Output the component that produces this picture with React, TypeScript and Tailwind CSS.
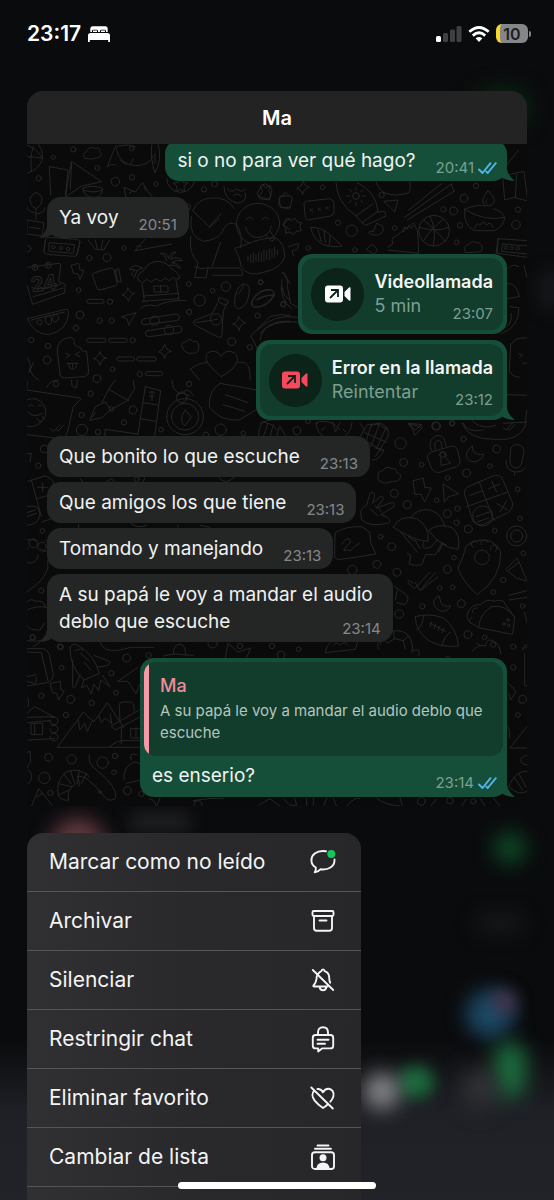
import type { ReactNode } from "react";

type IconProps = { className?: string };

/* =================== Fondo de garabatos =================== */

type Tile = { x: number; y: number; paths: string[]; dots: number[][] };

// Cada bloque se dibuja a 3x y se reduce al colocarlo
const TILES: Tile[] = [
  {
    x: 20,
    y: 140,
    paths: [
      // pelota, nube, ballena
      "M20 15q30 10 48 40q-10 35-48 45M20 50q25 0 48 5M40 20q-12 35-5 75M55 12q15 20 13 43",
      "M195 55q-12-12 4-20q8-18 24-10q18-4 16 10q12 10-4 18q-20 8-40 2Z",
      "M262 80q16-42 24-60q40-10 60 0M262 80q15-12 26-4M288 25q10 50 60 52q40 0 52-30M395 15q-4 44 10 84q22-40 10-84M405 40v30M300 60l20 15M330 76l10-20",
      // barco y taza
      "M88 80l4 84M88 80l56 10-8 80M155 65l90 60-62 14-46 32ZM155 65l-4 82M188 145q30-12 60 0q0 26-24 28q-32 0-36-28ZM190 150q30 12 56 0M180 172h70",
      // gato
      "M318 172l-6-30 34 14 22-28 16 26 14 18M328 160l8-6M372 140l6 12",
      // estrella en circulo
      "M440 115a42 42 0 0 0 84 0a42 42 0 0 0-8-24M482 112l6 15 16 2-12 10 2 16-13-8-14 8 4-16-11-10 15-2Z",
      // planta
      "M30 175q18-34 36-2q0 24-16 32q-20-2-20-30ZM48 205v34M48 220q-30-6-28-22M50 222q26-4 24-18M22 240l50 8-6 40-44-6ZM30 262l30 4",
      // boton con puntos
      "M76 300q0-8 8-8l88 6q8 2 8 10l-8 36q-4 6-12 5l-80-6q-8-2-8-8ZM88 308l76 6-4 26-72-6ZM76 300l-4 34M180 304l-10 40",
      // comida
      "M205 300l20 28 26 2 18-30M226 300l6 26M248 300l-4 28M345 332l30-34M345 332l110-20M350 318l14 2",
      // calendario
      "M22 382l95-12q6 0 5 7l-6 48 20 8-2 26-96 34-18-60M44 372v14M84 366v16M34 440q14 14 30 2q16 10 32-6q14 6 26-4M40 470l90-26",
      // rayo y camara
      "M154 376l22-6 4 20 12 2-12 26-6-16-12-2ZM218 408q-2-8 6-10l46-14q10 0 12 8l10 36q0 8-8 10l-44 12q-8 0-10-8ZM284 396l12-10 8 40-14-4M286 388l6 36",
      // cabana
      "M352 412q4-12 22-24q12-24 42-24q28 4 38 22q20 10 26 28l-12 4-8-6-12 10-12-8-14 10-14-8-14 10-14-8-12 10-12-8ZM366 432l6 36M468 420l8 48M372 468l104-8M366 484l112-8M402 438h42v18h-40ZM422 436v22M372 468v18M476 460v18M362 506q10-16 48-8q40-20 88-16",
      "M440 362q-2-18-20-22q22-4 26 16q4-20 22-20q-12 6-16 22q20-12 36 4q-18-4-34 6q22 2 26 18q-16-14-34-10M352 392q-14-4-24-4q12-20 40-4q-20 4-24 28q-16-12-2-20",
      // sandia
      "M22 536l114-28q10-2 10 8q-2 56-60 68q-44 0-64-48ZM34 540l100-24M50 546q4-10 12-6q8 8 2 14q-12 2-14-8ZM76 536q6-16 14-8q10 18 0 26q-16-2-14-18ZM100 526q14-8 16 8q-2 10-12 12q-10-6-4-20",
      "M206 478h40q6 0 6 6t-6 6h-40q-6 0-6-6t6-6ZM206 595h46q6 0 6 6t-6 6h-46q-6 0-6-6t6-6ZM272 595h44q6 0 6 6t-6 6h-44q-6 0-6-6t6-6ZM296 651h42q6 0 6 6t-6 6h-42q-6 0-6-6t6-6ZM356 651h46q6 0 6 6t-6 6h-46q-6 0-6-6t6-6ZM382 695h40q6 0 6 6t-6 6h-40q-6 0-6-6t6-6Z",
      "M306 530l42-12-22 38-4-18ZM324 444q4 16 20 16q-16 6-18 24q-4-16-20-20q16-4 18-20ZM240 636q4 16 20 18q-18 4-20 22q-4-18-20-20q16-4 20-20ZM434 614q4 16 20 20q-18 4-20 22q-4-18-18-20q14-6 18-22ZM656 530q4 14 22 18q-18 4-20 24q-4-18-20-20q16-6 18-22Z",
      "M374 536l96-14q10 2 8 12q-2 8-8 8l-98 12q-8-2-8-8t10-10ZM382 572l96-14q10 2 8 12q-2 8-8 8l-90 12q-10 0-12-8t6-10Z",
      // paleta
      "M120 704l-8-70q-2-34 36-42q18 2 14 14q2 14 18 16q4 14 20 12l6 60q0 14-12 16l-62 4q-10 0-12-10ZM136 640l14 6-12 8M178 636l-12 8 14 6M140 670h34M146 672q2 16 12 16q12-2 12-18M158 672v12M20 650q14 20 10 40q10 24 26 30M40 668l-14 30",
      // persona sentada
      "M518 212q20-40 60-38q40-4 64 30M518 212l50 48 36-40M514 230q-10 60 36 74q50-4 64-42q14-20 36-8q20 30 12 70M512 290q-6 50 22 78l-10 44 34 2 6-30h94q12 8 10 22h-90M576 380l26-74M568 262l30-26M524 380q20 10 40 4",
      "M612 140q0 40 40 50q30-4 24-30M622 146q14 16 26 0q16 14 28 2M640 166q14-10 24 4",
      // cara
      "M649 252a65 62 0 0 1 130 0a65 62 0 0 1-26 44M649 252a65 62 0 0 0 40 58M678 240q10-18 22 0M726 240q10-16 20-2M676 262q10 34 44 30q30-6 34-34M736 284l18 18q10 2 10-8l-14-20",
      // nota de voz
      "M648 324l24-8q60-26 96-22q26 16 26 56q-8 34-60 46q-50 18-70-16q-4-30-20-56ZM684 348v14M692 344v24M700 338v30M708 344v20M716 336v28M724 340v24M732 330v34M740 334v24M748 326v34M756 328v26M764 322v30M772 330v14",
      // botella, sandalias
      "M598 472l28 12-8 12-22-10ZM592 490l-14 30-56 22q-4 10 4 14l70 36q10 2 10-6l4-74 12-24M528 548l64-10M644 486q0-40 24-54q22-2 20 24q-6 46-32 50q-14-2-12-20ZM652 462q16-12 20-30M694 492q8-36 46-44q26 0 22 16q-20 34-54 38q-14 0-14-10ZM712 480q20-14 50-16",
      "M736 132l14 8-4 12 8 14-8 12-30-8 12-16-6-14ZM792 168q-14 0-14 12l4 22h28M810 236q-14 4-20 20l20 12M784 400q8-10 12 10l14 20M786 440q4 30 24 40M690 590l60-60q30-10 60-4M694 590l20 40 96-30M720 600q10-60 90-56",
      // globo con corazon
      "M604 710q-40-34-46-52q-2-24 22-24q16 0 24 16q10-18 28-16q24 6 20 30q-8 24-48 46ZM512 688q20-20 50-20M512 688l26 32M654 668q40-10 36 52M486 620q-6-14 12-14q10-14 20-2q20-2 18 16q2 20-18 20q-24 4-32-20Z",
    ],
    dots: [
      [100, 52, 6], [160, 28, 8], [335, 26, 7], [232, 84, 7], [56, 115, 8], [286, 125, 13], [336, 112, 8], [408, 132, 7],
      [552, 148, 8], [504, 200, 8], [24, 326, 9], [312, 324, 7], [208, 354, 8], [261, 353, 12], [176, 450, 7],
      [270, 485, 8], [539, 481, 17], [506, 432, 7], [578, 452, 7], [618, 440, 14], [722, 427, 7], [790, 494, 7],
      [180, 525, 12], [239, 542, 8], [275, 542, 8], [168, 564, 8], [34, 600, 8], [84, 618, 8], [81, 660, 12],
      [338, 601, 8], [278, 688, 7], [359, 702, 8], [231, 716, 12], [635, 605, 12], [690, 622, 8], [507, 516, 8],
      [588, 538, 17], [713, 527, 8], [404, 542, 14], [447, 570, 14], [100, 322, 5], [122, 324, 5], [144, 327, 5],
      [45, 382, 9], [85, 376, 9], [584, 132, 9],
    ],
  },
  {
    x: 250,
    y: 140,
    paths: [
      "M22 160l16-28 8 12 14-8 6 14-8 30-28-4ZM160 124q4 16 18 18q-18 4-20 22q-4-16-18-18q16-6 20-22ZM92 168h28q8 2 6 10l-6 24q-4 6-10 4l-20-6q-6-4-4-10ZM98 168q4-20 18-2",
      "M168 184l70-8q12 2 14 12v28q0 10-10 12l-66 12q-8 0-10-8l-4-40ZM180 206l8 8m0-8l-8 8M204 204l8 8m0-8l-8 8M228 200l8 8m0-8l-8 8",
      // cohete
      "M258 128q2 60 60 100l18 20 48-34q-6-60-62-86M318 228l50-36M336 248l12 8 60-28-4-14-22 2M318 150v-10M318 186v10M300 168h-10M336 168h10M304 154l-6-6M332 154l8-6M304 180l-6 8M332 180l6 8",
      "M378 124q10 30 30 36q30 10 60 0q16 4 12-36M402 184l42-4-10 36-16-16ZM464 232l140-100M472 240l140-86M476 210l100-80M604 132l8 22",
      // baloncesto
      "M506 272a46 46 0 1 0 92 0a46 46 0 1 0-92 0M508 262q50 16 88 0M540 228q20 40 10 90M522 240q44 40 64 64M580 238q-40 30-60 66",
      // lampara
      "M644 208q-4 50 30 64h60q28-14 30-40q-60 14-120-24ZM644 208q40-18 60-10M730 206q28 8 34 26M714 152q-28 34-8 44q24 6 28-14q-4-18-20-30ZM712 178q-10 8 0 14M674 266q6-22 16-10q10-20 20 0q10-16 20 6",
      "M758 108l64-14 10 80M758 108l6 72 36-10M800 104l-4 70 34 8M760 90q20-30 46-60M738 342l6-46 88 6M744 296l-2 44 90 12M758 312l74 6M758 312l-4 22 78 8M806 380q-20-10-30 4M822 376l10 40",
      "M104 244l8-10 12 8 10-8 8 12 12 2-4 14 4 10-16 2-8 10-12-8-12 4 2-14-8-10ZM182 262q36 0 60 24l34 32q-20 6-56-4q-32-16-38-52ZM204 270l10 34M222 272l4 34M240 286l-2 28M370 274l10-24 18 8 2 16q-14 18-40 8q-12-8 10-8Z",
      "M412 322l16-10-2-16 56-40 8-8 12 24q4 30 4 70M414 330l90 10M460 276l4-16 8 8 4-12 8 10 6-10M644 326q0-12 12-12q8-14 22-6q14-2 18 12q4 18-14 16l-34 2Z",
      "M350 328l12-14q14 0 20 18l-10 10ZM116 320l30-10-4 18-16 4 4 14M100 400q14 6 12 40l10 50 28 16M96 420q-10 60 30 86M6 484q20-36 56-34q16 4 10 18q-18 32-52 34q-16-2-14-18ZM20 478q30-16 50-10M22 570q50-50 120-38M30 580q30-40 110-34M780 500q30 4 26 2q4 60-54 80M784 520q4 40-30 48M772 430q30 0 36 40l-36 6M786 610q10-20 46-16M782 610l-4 80q4 20 30 22M806 640l12 6-10 8M818 670h14M770 764l62 2M30 850q10-10 20 0q18 0 30 20M200 852q6-10 20-8q30 0 50 26M330 850l14 20M360 862q20-20 40 0q20 2 10 8M476 850l40 4-20 16ZM640 850q10 30 60 20M760 850l70-4",
    ],
    dots: [
      [218, 142, 7], [395, 165, 8], [264, 248, 8], [305, 272, 17], [175, 324, 7], [434, 264, 7], [315, 330, 7], [318, 168, 10],
      [580, 208, 8], [611, 213, 12], [642, 175, 12], [678, 138, 8], [630, 256, 8], [620, 307, 7], [804, 209, 8], [798, 254, 13],
      [768, 323, 5], [785, 324, 5], [803, 325, 5], [32, 426, 7], [100, 492, 8], [560, 858, 12], [606, 850, 8],
    ],
  },
  {
    x: 20,
    y: 380,
    paths: [
      // globo con cara
      "M20 30l160 24q6 4-2 8l-18 18-16 70q-4 20-20 26l-104-12M20 60q30-14 52 16q16 30-12 54q-20 14-40 8M26 80q8-12 16 0M54 78q6-8 12 0M24 96q16 20 44 4M50 114l10 12q14-4 8-16M90 146l10 8 20-20M108 148l6 6 18-20",
      // pincel y cinta
      "M210 120l16-40 30-14 16 24-26 22ZM246 68l20-40 20-28M272 90l50-28 22-36-4-26M266 28l60 34M226 98l-8 14M376 20l46 12-18 136M376 20l-22 142M370 68l46 8M362 116l46 8M388 38q10-8 16 0M396 34v28M388 48h14M256 148l96 14M256 148l-2 22M20 34l2-30M80 22q10-22 34-22M154 0l2 16q4 10 14 6l2-22",
      // brujula
      "M440 110a55 54 0 1 0 110 0a55 54 0 1 0-110 0M454 110a41 40 0 1 0 82 0a41 40 0 1 0-82 0M496 90l18 22-20 26q-20-20 2-48ZM470 48q10-12 20-8l20 8M456 0q0 30 22 40M490 36q14-16 30 10",
      "M600 10q-34 20-32 70q30 44 90 40l50-30M616 44l68 24M610 74l64 20M600 10l110 20M716 170q0-30 10-40q20-14 50-10M730 170l14-40M750 170l10-36M770 170l8-30",
      // calculadora y fruta
      "M24 304l50-16q20 4 26 20l20 84q0 14-14 20l-40 14M34 300l30 110M50 356l64-18M68 308v28M54 322h28M20 380q40-10 40 24q-4 30-40 32M20 398l26-8M20 410l30-10M20 222l14-2-4 26M180 296l8 10M258 306l16-10 10 10M374 294l-4 12M596 290q16 30 50 0",
      "M24 506a24 22 0 1 0 30 20M62 506a16 16 0 1 0 14-24M20 480q16-4 30 2M84 540q10 50-64 96M20 668q10-16 26-4q26-6 30 18M20 690q30-14 60-8M20 736q10 16 40 14l14-20M78 778q-30 10-58 4M330 428q20 20 50 8M176 434v10M474 434v8M540 436l30 6",
    ],
    dots: [
      [108, 12, 8], [212, 41, 8], [274, 87, 7], [339, 90, 12], [185, 105, 8], [312, 127, 8], [186, 150, 17], [234, 156, 8],
      [423, 149, 7], [507, 12, 8], [602, 149, 17], [670, 160, 7], [485, 52, 16], [73, 207, 12], [55, 257, 8], [67, 453, 7],
      [40, 490, 13], [66, 500, 13], [64, 632, 8], [38, 772, 8], [120, 800, 8], [558, 164, 8], [350, 298, 7],
    ],
  },
  {
    x: 280,
    y: 410,
    paths: [
      "M108 36a54 54 0 0 0 108 0M158 36l8 30 14-28M126 60l8-8M196 66l-6-8M0 50l16 26M240 80l22-36 40-4q28 10 22 40l-38 60M254 68l64 28M248 86l56 36M274 44l-16 50M298 44l-26 66M316 56l-26 60M286 114q20 2 26 6q-12 30-36 30",
      "M386 42l42 10-24 24-6-20ZM546 40q20 50 100 48q70 6 90-40l4-48M576 32q30 30 70 14M670 52l8 8 20-22M682 56l6 6 16-18",
      // candado
      "M442 142q0-12 12-16l62-18q12 0 16 10l8 34q2 12-10 18l-54 18q-14 0-20-10ZM454 122l-4-18q2-24 24-28q20 2 22 24l2 8M466 116l-2-14q4-12 14-10q6 2 6 10l2 12M482 142a10 10 0 1 1 14 0l16 18-28 6Z",
      "M576 108q-24 20-14 38q20 20 44-2q6-6 4-12q-20 6-30-8ZM692 118q6-18 22-14q18 4 18 22l-8 38q-8 14-20 10q-14-6-14-20ZM678 150q-2 34 30 36q20 0 28-12M704 186v10M294 198q-2-14 14-16q10-16 28-6q14-2 14 12q16 4 10 18q-10 12-22 8l-22 6-20-8Z",
      "M400 212l30-8 4 28 20 2-20 42-12-24-16 2ZM490 222l46 30-30 8-12 16Z",
      // mano
      "M242 310q0-18 18-24l10-36q12-8 14 6l-6 24 20-18q12-6 12 4l-20 28 44-16q14 0 8 12l-40 24 20 8q14 10 2 18q-60 12-78-10ZM270 296l24 22M284 286l20 18",
      // cuadricula
      "M553 248q0-14 16-20l70-30q18-6 28 8l30 70q4 20-14 32l-70 34q-20 8-34-8ZM598 216l44 116M560 290l124-44M570 256l34-12M626 236l34-14M636 214l14 32M650 280l32 20M680 272l-20 34M588 320l40-14M592 336l34-12M578 318a30 30 0 1 0 60 0a30 30 0 1 0-60 0",
      // setas
      "M340 352q20-40 70-26q40 24 34 68q-40 0-104-42ZM392 324q16-30 60-24q36 14 42 50M446 362q30-26 72-8q26 24 16 64q-50-4-88-56ZM362 366l50 60M406 390l14 26M430 396q-8 30 24 14l20-22M384 378l20 16M486 400l-20 34-30 0-10 30q-16 6-38-2l4-26-10-6M488 402l-12 24M480 396l18 8",
      "M166 368q30-20 80-18l24 18 2 30 16 34-62 10-46 6q-18 2-16-14ZM186 402q12-22 24-14q4 12-8 20q-14 8-10 14q12-6 20 0q10-14 26-22",
      // pizza
      "M534 474q18-36 24-66q34-26 74-14q20 10 30 30q4 80-70 130q-46-40-58-80ZM580 412a10 10 0 1 1 12-14M604 404a10 10 0 1 1 20-8M632 420a10 10 0 1 1 14 4M606 420a22 22 0 1 0 0 44a22 22 0 1 0 0-44",
      "M384 518l20 18 46-50M406 518l14 24 46-54M424 540l50-40M384 510l16 10M476 558q-22 12-12 32q14 18 34 12q10-4 14-14q-20 4-28-8ZM342 528q20 14 36 26q14 14-4 30l-24-6M352 540l-6 30M678 478l34-34 30 70-32-10ZM686 480l30-22M686 556l56-14M688 570l54-8",
      // balon
      "M406 620q40-12 84 4q40 30 46 84q-50 6-90-16q-40-30-40-72ZM430 618q0 30-20 42M486 708q6-30 26-42M450 640l46 24M456 636l-6 14M468 642l-6 14M480 648l-6 14M492 654l-6 14",
      // taco
      "M596 652q4-44 40-62q40-8 68 32l-6 50ZM596 652l-18-10q-20-10-16-30q10-30 40-28q20-20 40-10q30-10 34 10l28 38M572 640q-10-10 4-18M578 608q-4-14 14-14",
      "M136 728q4-24 20-36M136 728l90-10 8-26M160 706q10-14 20 0q14-16 24 0M300 704q10-30 36-40q30-8 50 14q16 24 10 50M324 698l20-12 26 6 6 26M310 690l14 8M344 686l-4-20M370 692l16-14M296 716q-10-20 10-26M396 722q30-10 20 14M576 724q20-24 40-16q4-24 20-16q24 6 26 40M590 700l14 8M728 716q6-16 14-10M734 606l8 36",
    ],
    dots: [
      [51, 62, 12], [84, 34, 7], [362, 100, 17], [371, 157, 12], [425, 164, 7], [467, 48, 12], [518, 40, 7], [551, 87, 8],
      [650, 117, 12], [630, 168, 7], [560, 189, 12], [503, 204, 7], [343, 250, 12], [382, 284, 12], [470, 271, 7], [533, 296, 8],
      [502, 311, 12], [530, 338, 8], [565, 357, 12], [644, 362, 7], [713, 238, 7], [720, 325, 7], [302, 380, 7], [335, 410, 12],
      [291, 463, 12], [351, 487, 12], [217, 480, 14], [522, 443, 7], [502, 478, 12], [479, 534, 7], [518, 532, 7], [544, 581, 12],
      [427, 589, 8], [640, 546, 7], [670, 510, 8], [730, 430, 7], [728, 588, 7], [358, 612, 13], [672, 642, 4], [684, 630, 4],
      [686, 646, 4], [564, 674, 12], [614, 682, 7], [640, 704, 8], [56, 718, 7], [503, 748, 8], [710, 378, 30], [710, 378, 18],
      [488, 134, 8],
    ],
  },
  {
    x: 20,
    y: 630,
    paths: [
      "M20 56l50 0q14 4 18 18l12 60q-2 20-20 24l-60 10M20 66l44 2 20 84M20 140l30-6M20 154l24 6q8-4 4-18M40 50l20-14",
      // cohete
      "M150 52q10-16 24-6q50 30 64 84l-46 20q-44-40-42-98ZM166 62q20-10 22 0M182 70l24 22M192 96l20 24M222 76l46 18q4 10-6 12l-30 6M158 90l0 80q2 6 8 0l14-36M192 150l-8 24 16-8 14 26 8-30 14 20 6-32 28 20-22-34",
      "M92 160l30-6 0 24 10 6-16 26-6-20-12-2ZM240 36q10 30 50 26q30-6 40-10h70M294 154l60-42M294 154l30 0 24 38 12-30M430 78l30-6 60 4M460 72q0-28 20-30q20 6 16 34M616 84l8-44 30 26 38-12-14 34",
      // montanas y casas
      "M112 352l78-106 32 30 40-58 50 76M112 352h250M174 270l6 30 14-20 8 24 16-34M236 256l8 22 12-14 20 18-6-30M274 288l84-48M274 288l12 12 72-38M300 276l-2-50q0-10 10-10h26q8 4 8 14v14M304 292v50M332 296h30M332 296v28h30M348 292v30M268 352q20-24 60-20h30M20 250l24-20 60 32M20 262l80-2M20 278l70-6M24 330l80-4M34 280h34v34h-34ZM44 284v30M20 200q10 10 4 30",
      "M90 272a12 12 0 1 0 4-8M90 296a12 12 0 1 0 4-8M90 320a12 12 0 1 0 4-8M20 368l10-4 2 30-12 20M24 420q16 10 8 34l-12 10",
      // camaron
      "M208 374q-6 30 24 48q60 50 56 80q-10 14-30 4q-30-40-60-62q-10-6-26-4q10 20 4 30M208 440q-30-30-70-14q-34 30-22 74q14 14 30 10M132 432l22 30M120 462l36 8M118 494l30-14M152 424l12 36M178 422l-6 38M200 430l-16 30M146 510q-10-30 24-50M312 450q-4-40 30-54q10 0 18 6M320 460l40-10M334 390q-10-24 16-16M34 530l22-54 40 50M50 500l20-10M388 506q20 4 20 24M420 504l-10 26M520 512q60-10 90-6M716 526l34-20 30 22",
    ],
    dots: [
      [38, 22, 8], [122, 51, 8], [125, 113, 7], [320, 84, 12], [386, 76, 8], [274, 130, 8], [64, 197, 8], [152, 208, 12],
      [215, 219, 8], [288, 188, 7], [138, 255, 8], [86, 382, 12], [155, 388, 14], [248, 398, 17], [285, 378, 8], [73, 444, 17],
      [282, 427, 7], [91, 489, 8], [322, 482, 12], [240, 486, 4], [578, 40, 14], [660, 48, 8], [756, 48, 8], [783, 75, 12],
      [364, 492, 8], [534, 524, 12],
    ],
  },
  {
    x: 280,
    y: 640,
    paths: [
      "M728 30q14-16 14-6M734 40v94q4 10 8 4M684 128l16 18 8 8-16 26-6-20M690 324l52-66M690 324h52M684 258q10 20 4 36M686 440q20-50 56-46M686 440q30 30 56 14M704 414l24 36M718 402l20 40M742 346q-20 4-20 14q4 16 20 14",
      "M10 476l20 20h20l-6-22M80 474v24M100 474v22M140 474l-10 26M160 474l10 26M200 500q20-30 40-24M290 474q20 20 70 24M360 474l8 26M470 478l-20 22M560 476l-16 24M600 476l16 22M640 474l20 24",
    ],
    dots: [[700, 20, 8], [700, 82, 8], [728, 178, 12], [714, 225, 7], [424, 484, 12], [510, 482, 10], [580, 484, 8]],
  },
];

function ChatWallpaper() {
  return (
    <svg
      className="absolute inset-0 h-full w-full"
      viewBox="27 144 500 662"
      preserveAspectRatio="xMidYMin slice"
      fill="none"
      stroke="#252626"
      strokeWidth={3}
      strokeLinecap="round"
      strokeLinejoin="round"
      aria-hidden="true"
    >
      {TILES.map((tile) => (
        <g key={`${tile.x}-${tile.y}`} transform={`translate(${tile.x} ${tile.y}) scale(0.3333)`}>
          {tile.paths.map((d) => (
            <path key={d} d={d} />
          ))}
          {tile.dots.map(([cx, cy, r]) => (
            <circle key={`${cx}-${cy}-${r}`} cx={cx} cy={cy} r={r} />
          ))}
        </g>
      ))}
      {/* hoja del calendario */}
      <text x="32" y="292" transform="rotate(-8 32 292)" fontSize="20" fontWeight="700" strokeWidth="1">
        24
      </text>
    </svg>
  );
}

/* =================== Iconos =================== */

function BedIcon() {
  return (
    <svg className="h-4 w-[22px]" viewBox="0 0 22 16" fill="#fff" aria-hidden="true">
      <path d="M2.300 6V2.800Q2.300.300 4.800.300h12.400q2.500 0 2.500 2.500V6h-1.700V5Q18 3.700 16.800 3.700h-3.600Q12 3.700 12 5v1h-2V5q0-1.300-1.200-1.300H5.200Q4 3.700 4 5v1z" />
      <path d="M5 4.600h4V6H5zM13 4.600h4V6h-4z" />
      <path d="M0 9.500Q0 7 2.500 7h17Q22 7 22 9.500V16h-1.800v-2H1.800v2H0z" />
    </svg>
  );
}

function SignalIcon() {
  return (
    <svg className="h-4 w-[26px]" viewBox="0 0 26 16" fill="#3f4042" aria-hidden="true">
      <rect x="0" y="10" width="5" height="6" rx="1.500" fill="#fff" />
      <rect x="7" y="7" width="5" height="9" rx="1.500" />
      <rect x="14" y="3.500" width="5" height="12.500" rx="1.500" />
      <rect x="20.500" y="0" width="5" height="16" rx="1.500" />
    </svg>
  );
}

function WifiIcon() {
  return (
    <svg className="h-4 w-[22px]" viewBox="0 0 22 16" fill="none" stroke="#fff" strokeWidth="2.800" aria-hidden="true">
      <path d="M1.300 5.800Q11-2.800 20.700 5.800" />
      <path d="M4.800 9.600Q11 4 17.200 9.600" />
      <path d="M7.600 12.300Q11 9.600 14.400 12.300L11 16Z" fill="#fff" stroke="none" />
    </svg>
  );
}

function CheckIcon() {
  return (
    <svg className="h-3 w-[19px]" viewBox="0 0 19 12" fill="none" stroke="#52b6e4" strokeWidth="1.900" strokeLinecap="round" strokeLinejoin="round" aria-hidden="true">
      <path d="M1 7.500L4.500 11L12.500 1.200" />
      <path d="M8.300 9.600L9.700 11L17.800 1.200" />
    </svg>
  );
}

function CallIcon({ className = "" }: IconProps) {
  return (
    <svg className={`h-[18px] w-[26px] ${className}`} viewBox="0 0 26 18" fill="currentColor" aria-hidden="true">
      <rect x="0" y="0.500" width="18" height="17" rx="3" />
      <path d="M19.500 7L24 2.600Q25.500 1.500 25.500 3.500v11q0 2-1.500.900L19.500 11Z" />
      <path d="M5 13L12.500 5.500M6 5h7v7" fill="none" stroke="#0b2319" strokeWidth="1.800" />
    </svg>
  );
}

function Tail({ side }: { side: "left" | "right" }) {
  return (
    <svg
      className={`absolute bottom-0 h-3 w-4 ${side === "right" ? "-right-2 text-[#154f39]" : "-left-2 -scale-x-100 text-[#242626]"}`}
      viewBox="0 0 16 12"
      fill="currentColor"
      aria-hidden="true"
    >
      <path d="M0 0H8Q8.800 6.500 15.800 12Q9 12 3 8.500Z" />
    </svg>
  );
}

function MenuSvg({ children }: { children: ReactNode }) {
  return (
    <svg
      className="size-7"
      viewBox="0 0 28 28"
      fill="none"
      stroke="#f4f4f5"
      strokeWidth="1.900"
      strokeLinecap="round"
      strokeLinejoin="round"
      aria-hidden="true"
    >
      {children}
    </svg>
  );
}

/* =================== Mensajes =================== */

type BubbleProps = {
  lines: string[];
  time: string;
  side?: "left" | "right";
  tail?: boolean;
  className?: string;
};

function Bubble({ lines, time, side = "left", tail = false, className = "" }: BubbleProps) {
  const mine = side === "right";
  const last = lines.length - 1;

  return (
    <div
      className={`
        relative rounded-[14px] py-[7px] pl-3
        ${mine ? "self-end bg-[#154f39] pr-2.5" : "self-start bg-[#242626] pr-3"}
        ${className}
      `}
    >
      {tail && <Tail side={side} />}
      {lines.slice(0, last).map((line) => (
        <p key={line} className="pr-2 text-[19px] leading-[27px] text-[#f1f2f2]">{line}</p>
      ))}
      <div className="flex items-end justify-between gap-5">
        <p className="text-[19px] leading-[27px] text-[#f1f2f2]">{lines[last]}</p>
        <Stamp time={time} mine={mine} read={mine} />
      </div>
    </div>
  );
}

function Stamp({ time, mine = false, read = false }: { time: string; mine?: boolean; read?: boolean }) {
  return (
    <span className={`-mb-1 flex items-center gap-1 text-[15px] leading-5 ${mine ? "text-[#7d9f91]" : "text-[#868888]"}`}>
      {time}
      {read && <CheckIcon />}
    </span>
  );
}

type CallCardProps = {
  title: string;
  detail: string;
  time: string;
  failed?: boolean;
};

function CallCard({ title, detail, time, failed = false }: CallCardProps) {
  return (
    <div className="relative self-end rounded-[14px] bg-[#154f39] p-1">
      {failed && <Tail side="right" />}
      <button type="button" className="relative flex h-[72px] items-center gap-2.5 rounded-xl bg-[#123c2c] pr-2.5 pl-[9px] text-left">
        <span className="flex size-[53px] items-center justify-center rounded-full bg-[#0b2319]">
          <CallIcon className={failed ? "text-[#f8485e]" : "text-white"} />
        </span>
        <span className="flex flex-col pt-1.5">
          <span className="text-[18px] leading-6 font-semibold text-[#f4f6f5]">{title}</span>
          <span className="flex justify-between">
            <span className="text-[18px] leading-6 text-[#7d9f91]">{detail}</span>
            <span className="mt-2.5 text-[15px] leading-5 text-[#7d9f91]">{time}</span>
          </span>
        </span>
      </button>
    </div>
  );
}

function ReplyBubble() {
  return (
    <div className="relative mt-4 flex w-[367px] max-w-full flex-col self-end rounded-[14px] bg-[#154f39] p-1">
      <Tail side="right" />
      <blockquote className="flex overflow-hidden rounded-xl bg-[#123c2c]">
        <span className="w-[5px] shrink-0 bg-[#f79aa6]" />
        <div className="px-[11px] pt-2.5 pb-3">
          <p className="text-[18px] leading-7 font-medium text-[#f28b9c]">Ma</p>
          <p className="text-[15px] leading-[22px] text-[#b5c6be]">
            A su papá le voy a mandar el audio deblo que escuche
          </p>
        </div>
      </blockquote>
      <div className="flex items-end justify-between pt-1.5 pr-1.5 pb-1 pl-2">
        <p className="text-[19px] leading-[27px] text-[#f1f2f2]">es enserio?</p>
        <Stamp time="23:14" mine read />
      </div>
    </div>
  );
}

/* =================== Menú contextual =================== */

const MENU_ITEMS: { label: string; icon: ReactNode }[] = [
  {
    label: "Marcar como no leído",
    icon: (
      <MenuSvg>
        <path d="M17 3.300Q15.500 3 13.800 3C7.500 3 2.400 6.900 2.400 12.200c0 3.300 1.700 5.700 4.400 7.300c.3 2-.2 3.400-1.100 4.700c2.300-.100 4.100-1 5.700-2.900c8 1 14.100-2.800 14.100-9.100V11.500" />
        <circle cx="22.300" cy="6" r="4" fill="#12c85c" stroke="none" />
      </MenuSvg>
    ),
  },
  {
    label: "Archivar",
    icon: (
      <MenuSvg>
        <rect x="3.500" y="4" width="21" height="5" rx="1.200" />
        <path d="M5 9v12q0 2.800 2.800 2.800h12.400Q23 23.800 23 21V9M10.500 13.500h7" />
      </MenuSvg>
    ),
  },
  {
    label: "Silenciar",
    icon: (
      <MenuSvg>
        <path d="M9.500 7.400Q10.800 5.600 12.400 5.100Q12.600 3.400 14 3.400t1.600 1.700Q20 6.300 20.200 11.500q0 3.700 1 5.300M7.800 10Q7.500 16.500 4.500 19.500q-.5 1 .6 1H18.500M10.500 20.500q.6 3.800 3.500 3.800t3.500-3.800M3.800 4L24.200 24" />
      </MenuSvg>
    ),
  },
  {
    label: "Restringir chat",
    icon: (
      <MenuSvg>
        <path d="M9 10V7.500Q9 2.300 14 2.300t5 5.200V10M6.500 10h15q2.700 0 2.700 2.700v8q0 2.700-2.700 2.700H13l-3.800 3v-3H6.500q-2.700 0-2.700-2.700v-8Q3.800 10 6.500 10ZM8.500 14.700h11M8.500 18.700h7.500" />
      </MenuSvg>
    ),
  },
  {
    label: "Eliminar favorito",
    icon: (
      <MenuSvg>
        <path d="M8.500 5Q12.200 4.700 14 8.200Q16 4.600 19.800 4.800c3.600.4 5.500 3.800 4.600 7.500q-.7 2.800-3 5.400M5.500 6.500C2.500 9 3 13.200 5.700 16.600Q8.800 20.500 14 24q2.300-1.400 4.300-3.300M2.300 3.500L23.800 24.500" />
      </MenuSvg>
    ),
  },
  {
    label: "Cambiar de lista",
    icon: (
      <MenuSvg>
        <path d="M8.500 2.500h11M6 5.800h16" />
        <rect x="3" y="9.300" width="22" height="16.700" rx="2.800" />
        <circle cx="14" cy="14.700" r="3.500" fill="#f4f4f5" stroke="none" />
        <path d="M7.300 25.500q.7-6 6.700-6t6.700 6z" fill="#f4f4f5" stroke="none" />
      </MenuSvg>
    ),
  },
];

function ContextMenu() {
  return (
    <div
      role="menu"
      className="relative mt-[27px] min-h-0 w-[334px] flex-1 overflow-hidden rounded-t-2xl bg-linear-to-r from-[#302f31] via-[#29292b] to-[#272729]"
    >
      {MENU_ITEMS.map(({ label, icon }) => (
        <button
          key={label}
          type="button"
          role="menuitem"
          className="flex h-[59px] w-full items-center justify-between border-b border-[#555557] pr-6 pl-[22px] text-left text-[21px] leading-7 text-[#f4f4f5]"
        >
          {label}
          {icon}
        </button>
      ))}
    </div>
  );
}

/* =================== Lista de chats desenfocada =================== */

function BlurredBackdrop() {
  return (
    <div className="absolute inset-0" aria-hidden="true">
      <div className="absolute inset-x-0 bottom-0 h-40 bg-linear-to-b from-transparent via-[#1f2026] via-45% to-[#222329]" />
      <div className="absolute top-[818px] left-[50px] size-14 rounded-full bg-[#633a40] blur-[10px]" />
      <div className="absolute top-[812px] left-[128px] h-5 w-16 rounded-full bg-[#1e1f21] blur-[8px]" />
      <div className="absolute top-[832px] right-[28px] size-8 rounded-full bg-[#0d4826] blur-[10px]" />
      <div className="absolute top-[88px] right-[24px] h-10 w-14 rounded-full bg-[#09260f] blur-[10px]" />
      <div className="absolute top-[270px] -right-2 h-10 w-6 rounded-full bg-[#16171a] blur-[8px]" />
      <div className="absolute top-[915px] right-[30px] h-4 w-12 rounded-full bg-[#1a1b1e] blur-[10px]" />
      <div className="absolute top-[990px] right-[40px] size-12 rounded-full bg-[#1c4a66] blur-[10px]" />
      <div className="absolute top-[990px] right-[38px] size-6 rounded-full bg-[#463650] blur-[8px]" />
      <div className="absolute top-[1042px] right-[28px] h-14 w-8 rounded-full bg-[#1c6b3e] blur-[10px]" />
      <div className="absolute top-[1070px] right-[56px] size-9 rounded-full bg-[#37373b] blur-[12px]" />
      <div className="absolute top-[1066px] left-[398px] h-8 w-9 rounded-full bg-[#1c6b3e] blur-[8px]" />
      <div className="absolute top-[1073px] left-[364px] size-9 rounded-full bg-[#85868a] blur-[10px]" />
    </div>
  );
}

export default function App() {
  return (
    <main className="relative flex h-screen flex-col overflow-hidden bg-[#0a0b0d] px-[27px] font-['Inter','Liberation_Sans',sans-serif]">
      <BlurredBackdrop />

      {/* =================== Barra de estado =================== */}
      <header className="relative -mr-1 flex h-[91px] shrink-0 justify-between pt-[18px]">
        <div className="flex h-[31px] items-center gap-[7px] text-[21px] font-semibold text-white">
          23:17
          <BedIcon />
        </div>
        <div className="flex h-[31px] items-center gap-1.5">
          <SignalIcon />
          <WifiIcon />
          <div className="flex items-center gap-px">
            <span className="flex h-[19px] w-8 items-center justify-center rounded-md border-l-4 border-[#fbd72c] bg-[#858689] pr-1 text-[16px] leading-none font-semibold text-[#1c1d1f]">
              10
            </span>
            <span className="h-1.5 w-0.5 rounded-r-full bg-[#858689]" />
          </div>
        </div>
      </header>

      {/* =================== Vista previa del chat =================== */}
      <section className="relative shrink-0 overflow-hidden rounded-t-2xl">
        <h1 className="flex h-[53px] items-center justify-center bg-[#232323] text-[20px] font-semibold text-white">Ma</h1>

        <div className="relative overflow-hidden bg-[#0a0a0a]">
          <ChatWallpaper />
          <div className="relative -mt-1 flex flex-col px-5 pb-[9px]">
            <Bubble lines={["si o no para ver qué hago?"]} time="20:41" side="right" tail />
            <Bubble lines={["Ya voy"]} time="20:51" tail className="mt-4" />
            <div className="mt-4 flex flex-col gap-1.5">
              <CallCard title="Videollamada" detail="5 min" time="23:07" />
              <CallCard title="Error en la llamada" detail="Reintentar" time="23:12" failed />
            </div>
            <div className="mt-4 flex flex-col gap-[5px]">
              <Bubble lines={["Que bonito lo que escuche"]} time="23:13" />
              <Bubble lines={["Que amigos los que tiene"]} time="23:13" />
              <Bubble lines={["Tomando y manejando"]} time="23:13" />
              <Bubble lines={["A su papá le voy a mandar el audio", "deblo que escuche"]} time="23:14" tail />
            </div>
            <ReplyBubble />
          </div>
        </div>
      </section>

      <ContextMenu />

      <div className="absolute bottom-[11px] left-1/2 h-[7px] w-[198px] -translate-x-1/2 rounded-full bg-white" />
    </main>
  );
}
